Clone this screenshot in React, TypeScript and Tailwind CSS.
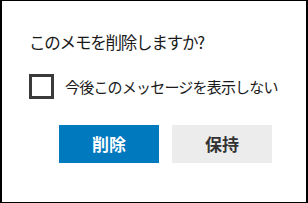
export default function App() {
  return (
    <div
      className="w-[308px] h-[203px] bg-white border-x-2 border-y border-black"
      style={{ fontFamily: '"Noto Sans CJK JP", "Noto Sans", sans-serif' }}
    >
      <div className="pl-[27px] pt-[29px]">
        <h1 className="text-[16.5px] leading-6 text-[#1a1a1a] tracking-[-1.2px]">このメモを削除しますか?</h1>

        <label className="mt-[20px] flex items-center gap-[11px]">
          <span className="w-[25px] h-[25px] border-[3px] border-[#3a3a3a] bg-white" />
          <span className="text-[15px] leading-6 text-[#1a1a1a] tracking-[-0.8px]">
            今後このメッセージを表示しない
          </span>
        </label>

        <div className="mt-[26px] ml-[30px] flex gap-[13px]">
          <button className="w-[100px] h-[38px] bg-[#0079bf] text-white text-[17px] font-bold">
            削除
          </button>
          <button className="w-[100px] h-[38px] bg-[#ececec] text-[#333] text-[17px] font-bold">
            保持
          </button>
        </div>
      </div>
    </div>
  );
}
